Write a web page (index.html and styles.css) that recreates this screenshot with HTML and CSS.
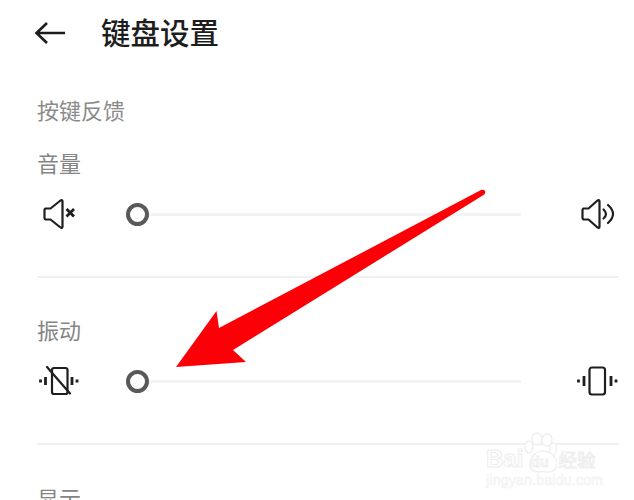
FILE: index.html
```html
<!DOCTYPE html>
<html lang="zh">
<head>
<meta charset="utf-8">
<title>键盘设置</title>
<link rel="stylesheet" href="styles.css">
</head>
<body>
<main class="page">
  <header class="header">
    <svg class="back" width="32" height="24" viewBox="0 0 32 24"><path d="M31 12H3M13 2 2.500 12 13 22"/></svg>
    <h1 class="title">键盘设置</h1>
  </header>
  <h2 class="group">按键反馈</h2>
  <section class="section section-volume">
    <h3 class="label">音量</h3>
    <div class="row">
      <svg class="icon" width="44" height="32" viewBox="0 0 44 32"><path d="M7.500 10.500h5L22.500 2.500q2-1 2 1V28.500q0 2-2 1L12.500 21.500h-5q-1-.5-1-1.500v-8q0-1 1-1.500Z"/><path class="bold" d="m28.500 11 7.500 7.500M36 11l-7.500 7.500"/></svg>
      <div class="slider"><span class="thumb"></span><span class="track"></span></div>
      <svg class="icon" width="44" height="32" viewBox="0 0 44 32"><path d="M7.500 10.500h5L21.500 2.500q2-1 2 1V28.500q0 2-2 1L12.500 21.500h-5q-1-.5-1-1.500v-8q0-1 1-1.500Z"/><path d="M27.500 11.500q5 4.500 0 9M32 7q10 9 0 18"/></svg>
    </div>
  </section>
  <section class="section section-vibrate">
    <h3 class="label">振动</h3>
    <div class="row">
      <svg class="icon" width="44" height="32" viewBox="0 0 44 32"><rect x="14" y="3" width="15.500" height="26" rx="2"/><path d="m9 2 23 26.500"/><path class="bold" d="M7.500 12v8M34 12v8"/><path class="bold" d="M2.500 14.500v3M39 14.500v3"/></svg>
      <div class="slider"><span class="thumb"></span><span class="track"></span></div>
      <svg class="icon" width="44" height="32" viewBox="0 0 44 32"><rect x="13.500" y="2.500" width="15.500" height="27" rx="2.500"/><path class="bold" d="M8 11v10M35 11v10"/><path class="bold" d="M2.500 14.500v3M40 14.500v3"/></svg>
    </div>
  </section>
  <h3 class="label label-display">显示</h3>
</main>
<svg class="pointer" width="634" height="500" viewBox="0 0 634 500"><path d="M176 367 216.500 311 219 328 481 190q3-1 4 1t-1.500 4L233 350l13 12Z"/></svg>
<div class="watermark">
  <svg class="paw" width="40" height="42" viewBox="0 0 40 42"><ellipse cx="12" cy="15" rx="4" ry="6"/><ellipse cx="20" cy="7" rx="5" ry="6"/><ellipse cx="30" cy="8" rx="5" ry="6"/><ellipse cx="36" cy="17" rx="3.500" ry="6"/><path d="M13 32q1-12 13-13 12 1 14 12 0 9-10 9-4-1-8 0-9 0-9-8Z"/></svg>
  <div class="mark-top"><span class="mark-bai">Bai</span><span class="mark-du">du</span><span class="mark-jy">经验</span></div>
  <div class="mark-url">jingyan.baidu.com</div>
</div>
</body>
</html>
```
FILE: styles.css
```css
* { box-sizing: border-box; }
html, body { margin: 0; padding: 0; height: 500px; overflow: hidden; background: #fff; }
body { position: relative; font-family: "Noto Sans CJK SC", "Noto Sans", sans-serif; }
.page { padding: 0 15px 0 37px; }
.header { display: flex; align-items: center; height: 66px; gap: 35px; margin-left: -3px; }
.back { fill: none; stroke: #1c1c1c; stroke-width: 2.600; flex: none; }
.title { margin: 0 0 4px; font-size: 29.500px; line-height: 40px; font-weight: 500; color: #1d1d1d; }
.group { margin: 27px 0 0; font-size: 22px; line-height: 32px; font-weight: 400; color: #8b8b8b; }
.section { border-bottom: 2px solid #f0f0f0; }
.section-volume { height: 153px; padding-top: 21px; }
.section-vibrate { height: 167px; padding-top: 35px; }
.label { margin: 0; font-size: 22px; line-height: 32px; font-weight: 400; color: #858585; }
.label-display { margin-top: 36px; }
.row { display: flex; align-items: center; height: 32px; margin-top: 20px; }
.icon { fill: none; stroke: #1e1e1e; stroke-width: 2.200; stroke-linejoin: round; stroke-linecap: round; flex: none; margin-left: 1px; }
.icon .bold { stroke-width: 2.800; stroke-linecap: butt; }
.slider { display: flex; align-items: center; width: 395px; margin: 0 54px 0 44px; flex: none; }
.thumb { width: 23px; height: 23px; border: 4.500px solid #595959; border-radius: 50%; flex: none; }
.track { height: 3px; flex: 1; background: #f3f3f3; }
.pointer { position: absolute; left: 0; top: 0; pointer-events: none; }
.pointer path { fill: #fb0007; }
.watermark { position: absolute; left: 484px; top: 432px; width: 120px; height: 60px; color: #fff; }
.paw { position: absolute; left: 33px; top: 0; fill: #fff; stroke: #f0f0f0; stroke-width: 1.500; }
.mark-top { position: absolute; left: 2px; top: 10px; display: flex; align-items: baseline; font-family: "Liberation Sans", sans-serif; font-weight: 700; white-space: nowrap; -webkit-text-stroke: 1px #eeeeee; }
.mark-bai { font-size: 24px; line-height: 34px; }
.mark-du { font-size: 14px; margin: 0 10px 0 8px; }
.mark-jy { font-family: "Noto Sans CJK SC", sans-serif; font-size: 18.500px; font-weight: 400; }
.mark-url { position: absolute; left: 2px; top: 40px; font-family: "Liberation Sans", sans-serif; font-size: 14px; line-height: 16px; letter-spacing: .25px; -webkit-text-stroke: .6px #f0f0f0; white-space: nowrap; }
```
